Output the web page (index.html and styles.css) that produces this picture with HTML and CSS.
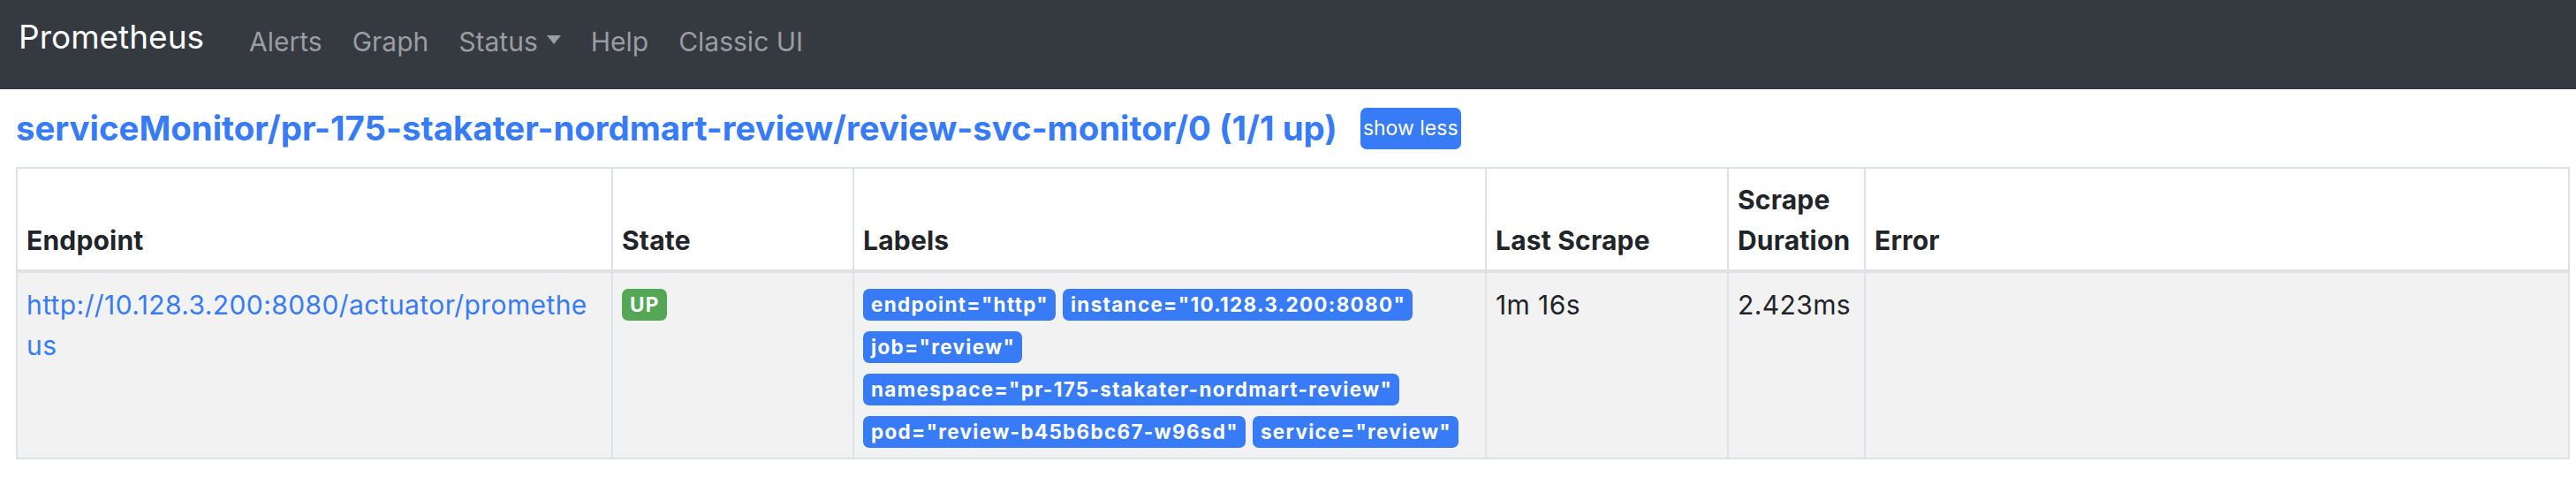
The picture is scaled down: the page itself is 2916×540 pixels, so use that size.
FILE: index.html
```html
<!DOCTYPE html>
<html lang="en">
<head>
<meta charset="utf-8">
<title>Prometheus Time Series Collection and Processing Server</title>
<link rel="stylesheet" href="styles.css">
</head>
<body>
<nav class="navbar">
  <a class="brand" href="#">Prometheus</a>
  <ul class="nav">
    <li><a class="nav-link" href="#">Alerts</a></li>
    <li><a class="nav-link" href="#">Graph</a></li>
    <li><a class="nav-link dropdown" href="#">Status<span class="caret"></span></a></li>
    <li><a class="nav-link" href="#">Help</a></li>
    <li><a class="nav-link" href="#">Classic UI</a></li>
  </ul>
</nav>
<main class="container">
  <div class="pool-head">
    <a class="pool-title" href="#">serviceMonitor/pr-175-stakater-nordmart-review/review-svc-monitor/0 (1/1 up)</a>
    <button class="btn-toggle" type="button">show less</button>
  </div>
  <table class="targets">
    <thead>
      <tr>
        <th class="col-endpoint">Endpoint</th>
        <th class="col-state">State</th>
        <th class="col-labels">Labels</th>
        <th class="col-last">Last Scrape</th>
        <th class="col-duration">Scrape Duration</th>
        <th class="col-error">Error</th>
      </tr>
    </thead>
    <tbody>
      <tr>
        <td class="endpoint"><a href="#">http://10.128.3.200:8080/actuator/prometheus</a></td>
        <td><span class="badge badge-up">UP</span></td>
        <td class="labels-cell">
          <div class="labels">
            <span class="badge badge-label">endpoint="http"</span>
            <span class="badge badge-label">instance="10.128.3.200:8080"</span>
            <span class="badge badge-label">job="review"</span>
            <span class="badge badge-label">namespace="pr-175-stakater-nordmart-review"</span>
            <span class="badge badge-label">pod="review-b45b6bc67-w96sd"</span>
            <span class="badge badge-label">service="review"</span>
          </div>
        </td>
        <td>1m 16s</td>
        <td>2.423ms</td>
        <td></td>
      </tr>
    </tbody>
  </table>
</main>
</body>
</html>
```
FILE: styles.css
```css
* { box-sizing: border-box; }

body {
  margin: 0;
  font-family: Inter, "Noto Sans", "Liberation Sans", sans-serif;
  color: #212529;
  background: #ffffff;
}

a { text-decoration: none; }

.navbar {
  display: flex;
  align-items: center;
  height: 101px;
  padding: 0 0 0 21px;
  background: #343a40;
}

.brand {
  font-size: 37px;
  color: #ffffff;
  margin-right: 34px;
  position: relative;
  top: -9px;
}

.nav {
  display: flex;
  list-style: none;
  margin: 0;
  padding: 0;
  position: relative;
  top: -4px;
}

.nav-link {
  display: flex;
  align-items: center;
  font-size: 30px;
  color: #9a9da1;
  padding: 0 17px;
}

.caret {
  display: inline-block;
  margin-left: 10px;
  border-top: 10px solid #9a9da1;
  border-left: 8.5px solid transparent;
  border-right: 8.5px solid transparent;
  position: relative;
  top: -2px;
}

.container {
  padding: 0 7px 0 18px;
}

.pool-head {
  display: flex;
  align-items: center;
  height: 88px;
}

.pool-title {
  font-size: 38.4px;
  font-weight: 700;
  color: #377bf6;
}

.btn-toggle {
  margin-left: 26px;
  width: 114px;
  height: 47px;
  border: none;
  border-radius: 7px;
  background: #377bf6;
  color: #ffffff;
  font-family: Inter, "Noto Sans", "Liberation Sans", sans-serif;
  font-size: 23px;
  padding: 0;
}

.targets {
  width: 100%;
  table-layout: fixed;
  border-collapse: collapse;
  border: 2px solid #dee2e6;
  font-size: 30px;
}

.targets th {
  text-align: left;
  vertical-align: bottom;
  font-weight: 700;
  line-height: 46px;
  letter-spacing: 0.2px;
  padding: 12px 10px 10px;
  border: 2px solid #dee2e6;
  border-bottom: 4px solid #dee2e6;
  background: #ffffff;
}

.col-endpoint { width: 674px; }
.col-state { width: 273px; }
.col-labels { width: 716px; }
.col-last { width: 274px; }
.col-duration { width: 155px; }

.targets td {
  vertical-align: top;
  line-height: 46px;
  letter-spacing: 0.4px;
  padding: 13px 10px 9px;
  border: 2px solid #dee2e6;
  background: #f2f2f2;
}

.targets td.endpoint {
  padding-right: 20px;
}

.endpoint a {
  color: #377bf6;
  word-break: break-all;
}

.badge {
  display: inline-block;
  height: 36px;
  line-height: 36px;
  font-size: 22.5px;
  font-weight: 700;
  letter-spacing: 1.3px;
  color: #ffffff;
  border-radius: 7px;
  padding: 0 8px 0 9px;
  white-space: nowrap;
}

.badge-up {
  background: #54a754;
  vertical-align: top;
  margin-top: 5px;
}

.targets td.labels-cell { padding-top: 9px; }

.labels {
  display: flex;
  flex-wrap: wrap;
  column-gap: 8px;
  row-gap: 12px;
  margin-top: 9px;
  padding-bottom: 2px;
}

.badge-label {
  background: #377bf6;
}
```
